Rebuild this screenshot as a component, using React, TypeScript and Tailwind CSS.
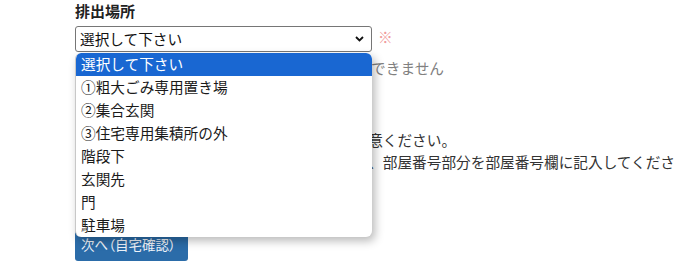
import React from "react";

const options = [
  "選択して下さい",
  "①粗大ごみ専用置き場",
  "②集合玄関",
  "③住宅専用集積所の外",
  "階段下",
  "玄関先",
  "門",
  "駐車場",
];

export default function App() {
  return (
    <div className="w-[700px] h-[267px] overflow-hidden bg-white font-['Noto_Sans_CJK_JP','Noto_Sans',sans-serif] text-[14.67px] text-[#333]">
      <div className="pl-[75px]">
        <div className="text-[15px] font-bold leading-[22px] text-[#222]">排出場所</div>
        <div className="relative mt-[4px] flex items-center gap-[6px]">
          <div className="flex h-[26px] w-[297px] items-center justify-between rounded-[3px] border border-[#767676] bg-white pl-[4px] pr-[7px] text-[14.67px] text-[#111]">
            <span className="leading-none">選択して下さい</span>
            <svg width="9" height="6" viewBox="0 0 9 6" aria-hidden="true">
              <path d="M1 1 L4.5 4.5 L8 1" fill="none" stroke="#111" strokeWidth="1.8" />
            </svg>
          </div>
          <span className="-mt-[3px] leading-none text-[#f09a9a]">※</span>

          <ul className="absolute left-0 top-full z-10 mt-px w-[297px] overflow-hidden rounded-[6px] border-l border-[#c8c8c8] bg-white shadow-[3px_4px_10px_rgba(0,0,0,0.28)]">
            {options.map((o, i) => (
              <li
                key={o}
                className={
                  i === 0
                    ? "h-[23px] rounded-t-[5px] bg-[#1967d2] pl-[5px] leading-[22px] text-white"
                    : "h-[23px] pl-[5px] leading-[22px] text-[#1a1a1a]"
                }
              >
                {o}
              </li>
            ))}
          </ul>
        </div>

        <div className="mt-[5px] whitespace-nowrap leading-[22px] text-[#808080]">
          ※ お申込み時にご選択した場所以外には排出できません
        </div>

        <div className="mt-[50px] whitespace-nowrap leading-[22px]">
          <div>ごみを出す際は収集日時をご確認の上、ご注意ください。</div>
          <div>集合住宅にお住まいの方は、住所欄に建物名、部屋番号部分を部屋番号欄に記入してくださ</div>
          <div>い。</div>
        </div>

        <button className="mt-[34px] block h-[32px] w-[113px] rounded-[3px] bg-[#2b6ca9] pl-[6px] text-left text-[13.5px] leading-none text-[#eef3f9] [font-feature-settings:'palt']">
          次へ（自宅確認）
        </button>
      </div>
    </div>
  );
}
